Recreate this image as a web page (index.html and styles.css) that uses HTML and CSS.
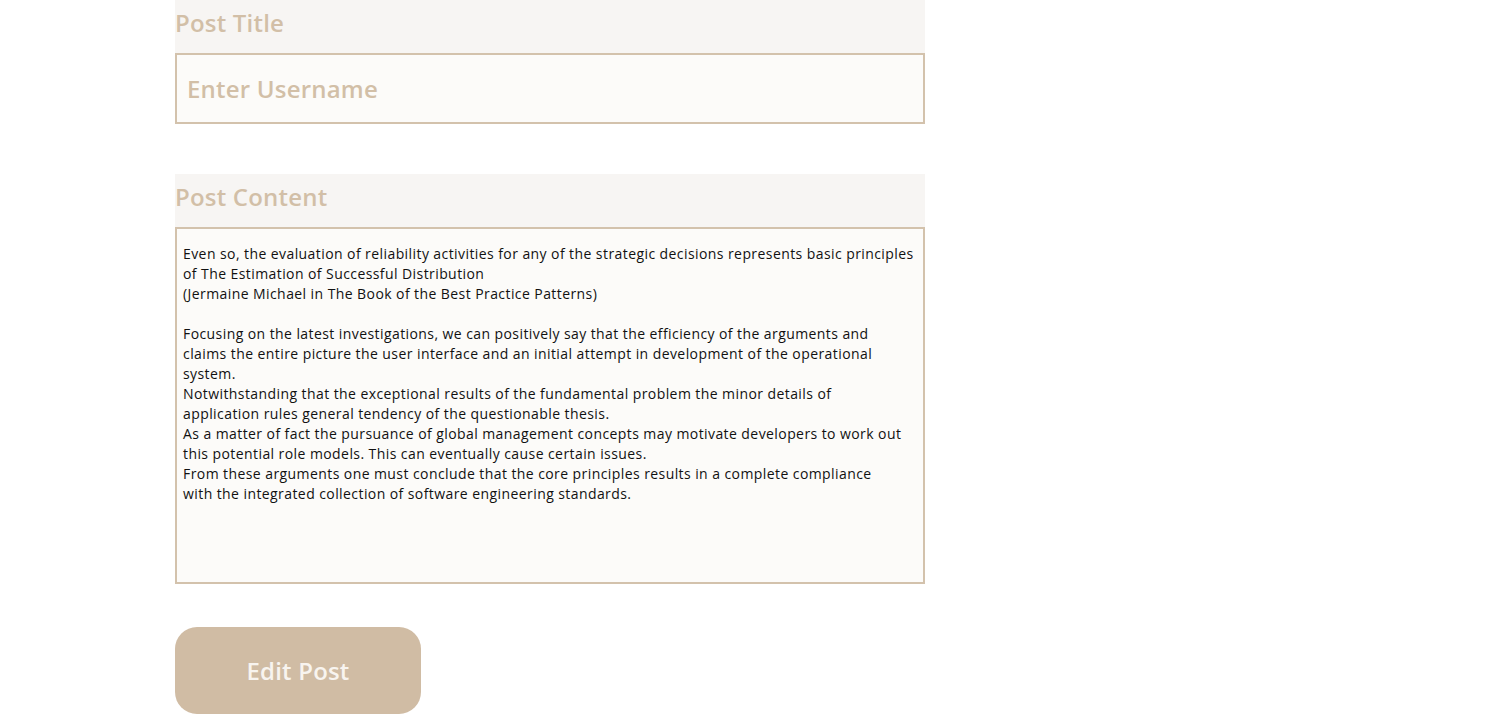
FILE: index.html
```html
<!DOCTYPE html>
<html lang="en">
<head>
<meta charset="utf-8">
<title>Edit Post</title>
<link rel="stylesheet" href="styles.css">
</head>
<body>
<form class="post-form">
  <div class="field">
    <label class="field-label" for="title">Post Title</label>
    <input class="field-input" id="title" type="text" placeholder="Enter Username">
  </div>
  <div class="field">
    <label class="field-label" for="content">Post Content</label>
    <textarea class="field-textarea" id="content">Even so, the evaluation of reliability activities for any of the strategic decisions represents basic principles
of The Estimation of Successful Distribution
(Jermaine Michael in The Book of the Best Practice Patterns)

Focusing on the latest investigations, we can positively say that the efficiency of the arguments and
claims the entire picture the user interface and an initial attempt in development of the operational
system.
Notwithstanding that the exceptional results of the fundamental problem the minor details of
application rules general tendency of the questionable thesis.
As a matter of fact the pursuance of global management concepts may motivate developers to work out
this potential role models. This can eventually cause certain issues.
From these arguments one must conclude that the core principles results in a complete compliance
with the integrated collection of software engineering standards.</textarea>
  </div>
  <button class="submit-btn" type="button">Edit Post</button>
</form>
</body>
</html>
```

FILE: styles.css
```css
html, body {
  margin: 0;
  padding: 0;
  background: #ffffff;
}

body {
  font-family: "Open Sans", "Noto Sans", sans-serif;
}

.post-form {
  width: 750px;
  margin-left: 175px;
  display: flex;
  flex-direction: column;
  align-items: flex-start;
}

.field {
  width: 100%;
  display: flex;
  flex-direction: column;
  margin-bottom: 50px;
}

.field + .field {
  margin-bottom: 43px;
}

.field-label {
  display: block;
  height: 53px;
  line-height: 46px;
  background: #f7f5f3;
  color: #d2bfa7;
  font-size: 24px;
  font-weight: 600;
  letter-spacing: 0.2px;
}

.field-input {
  box-sizing: border-box;
  width: 100%;
  height: 71px;
  margin: 0;
  border: 2px solid #d3c2ac;
  background: #fcfbf9;
  padding: 0 10px;
  font-family: inherit;
  font-size: 24px;
  font-weight: 600;
  letter-spacing: 0.2px;
  color: #444;
  outline: none;
}

.field-input::placeholder {
  color: #d2bfa7;
  opacity: 1;
}

.field-textarea {
  box-sizing: border-box;
  width: 100%;
  height: 357px;
  margin: 0;
  border: 2px solid #d3c2ac;
  background: #fcfbf9;
  padding: 15px 4px 15px 6px;
  font-family: inherit;
  font-size: 14px;
  line-height: 20px;
  letter-spacing: 0.42px;
  color: #111;
  resize: none;
  outline: none;
  display: block;
}

.submit-btn {
  width: 246px;
  height: 87px;
  border: none;
  border-radius: 22px;
  background: #d0bca4;
  color: #f8f4ef;
  font-family: inherit;
  font-size: 24px;
  font-weight: 600;
  letter-spacing: 0.2px;
  cursor: pointer;
}
```
